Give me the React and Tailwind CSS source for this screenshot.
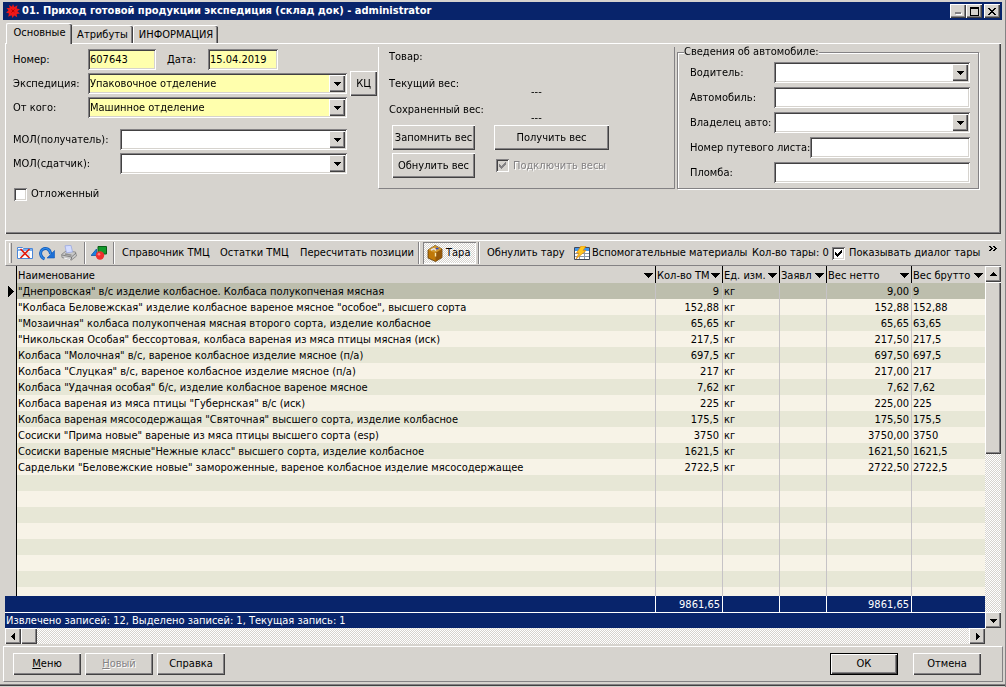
import React, { useState } from "react";
import clsx from "clsx";

const raised =
  "bg-[#d6d3ce] shadow-[inset_1px_1px_0_#fff,inset_-1px_-1px_0_#424142,inset_-2px_-2px_0_#848284]";
const sunken =
  "shadow-[inset_1px_1px_0_#848284,inset_-1px_-1px_0_#fff,inset_2px_2px_0_#424142,inset_-2px_-2px_0_#d6d3ce]";
const dither =
  "bg-[conic-gradient(#fff_25%,#d6d3ce_0_50%,#fff_0_75%,#d6d3ce_0)] bg-[length:2px_2px]";

const rows = [
  ['"Днепровская" в/с изделие колбасное. Колбаса полукопченая мясная', "9", "9,00", "9"],
  ['"Колбаса Беловежская" изделие колбасное вареное мясное "особое", высшего сорта', "152,88", "152,88", "152,88"],
  ['"Мозаичная" колбаса полукопченая мясная второго сорта, изделие колбасное', "65,65", "65,65", "63,65"],
  ['"Никольская Особая" бессортовая, колбаса вареная из мяса птицы мясная (иск)', "217,5", "217,50", "217,5"],
  ['Колбаса "Молочная" в/с, вареное колбасное изделие мясное (п/а)', "697,5", "697,50", "697,5"],
  ['Колбаса "Слуцкая" в/с, вареное колбасное изделие мясное (п/а)', "217", "217,00", "217"],
  ['Колбаса "Удачная особая" б/с, изделие колбасное вареное мясное', "7,62", "7,62", "7,62"],
  ['Колбаса вареная из мяса птицы "Губернская" в/с (иск)', "225", "225,00", "225"],
  ['Колбаса вареная мясосодержащая "Святочная" высшего сорта, изделие колбасное', "175,5", "175,50", "175,5"],
  ['Сосиски "Прима новые" вареные из мяса птицы высшего сорта (esp)', "3750", "3750,00", "3750"],
  ['Сосиски вареные мясные"Нежные класс" высшего сорта, изделие колбасное', "1621,5", "1621,50", "1621,5"],
  ['Сардельки "Беловежские новые" замороженные, вареное колбасное изделие мясосодержащее', "2722,5", "2722,50", "2722,5"],
];

const columns = ["Наименование", "Кол-во ТМ", "Ед. изм.", "Заявл", "Вес нетто", "Вес брутто"];

function Triangle({ dir = "down", className }) {
  const paths = {
    down: "M0 2h7v1H6v1H5v1H4v1H3V5H2V4H1V3H0z",
    up: "M0 5h7V4H6V3H5V2H4V1H3v1H2v1H1v1H0z",
    left: "M5 0v7H4V6H3V5H2V4H1V3h1V2h1V1h1V0z",
    right: "M2 0v7h1V6h1V5h1V4h1V3H5V2H4V1H3V0z",
  };
  return (
    <svg width="7" height="7" viewBox="0 0 7 7" shapeRendering="crispEdges" className={className}>
      <path d={paths[dir]} />
    </svg>
  );
}

function Button({ children, className, ...props }) {
  return (
    <button type="button" className={clsx(raised, "shrink-0 whitespace-nowrap text-center", className)} {...props}>
      {children}
    </button>
  );
}

function TextField({ id, className, ...props }) {
  return (
    <input id={id} type="text" className={clsx(sunken, "h-[21px] min-w-0 px-[2px] outline-none", className)} {...props} />
  );
}

function Combo({ id, value, yellow, className }) {
  return (
    <div className={clsx("relative h-[21px] min-w-0", className)}>
      <select
        id={id}
        className={clsx(
          sunken,
          "block h-full w-full appearance-none px-[2px] outline-none",
          yellow ? "bg-[#ffffad]" : "bg-white"
        )}
      >
        <option>{value}</option>
      </select>
      <span className={clsx(raised, "pointer-events-none absolute inset-y-[2px] right-[2px] flex w-4 items-center justify-center")}>
        <Triangle />
      </span>
    </div>
  );
}

function Check({ id, disabled, checked, onChange }) {
  return (
    <span className="relative block h-[13px] w-[13px] shrink-0">
      <input
        id={id}
        type="checkbox"
        checked={checked}
        disabled={disabled}
        onChange={onChange}
        className={clsx(sunken, "block h-full w-full appearance-none", disabled ? "bg-[#d6d3ce]" : "bg-white")}
      />
      {checked && (
        <svg width="7" height="7" viewBox="0 0 7 7" shapeRendering="crispEdges" className="pointer-events-none absolute top-[3px] left-[3px]">
          <path
            d="M0 2h1v1h1v1h1V3h1V2h1V1h1V0h1v3H6v1H5v1H4v1H3v1H2V6H1V5H0z"
            fill={disabled ? "#848284" : "#000"}
          />
        </svg>
      )}
    </span>
  );
}

function BurstIcon() {
  return (
    <svg width="14" height="14" viewBox="0 0 14 14">
      <path
        d="M7 0l1.3 3L11.500 1.200l-.8 3.400L14 5.300 11.400 7.300 14 9.600l-3.400.3.6 3.300-3-1.800L6.500 14l-1-2.800-3.300 1.600.8-3.300L0 8.600l2.500-2L.5 4l3.200.1L3 1l3 1.800z"
        fill="#f01818"
      />
      <path d="M5.500 5.500l3 2.500M8.500 5.500l-3 3" stroke="#b00000" />
    </svg>
  );
}

function DeleteIcon() {
  return (
    <svg width="16" height="16" viewBox="0 0 16 16">
      <path d="M.5 4.500v-2h5l1 1h9v10H.5z" fill="#fff" stroke="#4a86d8" />
      <path d="M1 4h14v2H1z" fill="#7db1f0" />
      <path d="M2.500 8h4M2.500 10h3M10 8h3M11 10h2" stroke="#9cc3ee" />
      <path d="M3.500 4l9 9M12.500 4l-9 9" stroke="#e01c10" strokeWidth="1.700" />
    </svg>
  );
}

function RefreshIcon() {
  return (
    <svg width="16" height="16" viewBox="0 0 16 16">
      <path d="M5.500 14C1 12 .5 6.500 3.500 4.500c3-2.200 7.500-1 8.200 4.500" fill="none" stroke="#1259b8" strokeWidth="3" />
      <path d="M5.500 14C1 12 .5 6.500 3.500 4.500c3-2.200 7.500-1 8.200 4.500" fill="none" stroke="#2f8ae8" strokeWidth="1.400" />
      <path d="M15.500 5.500v7.500H8z" fill="#1c6fd6" stroke="#1259b8" strokeWidth=".6" />
    </svg>
  );
}

function PrinterIcon() {
  return (
    <svg width="16" height="16" viewBox="0 0 16 16">
      <path d="M.5 9.500L5 6l9.500 1 1 4-5 4L1 12.500z" fill="#c9c9c9" stroke="#808080" strokeWidth=".8" />
      <path d="M4 .8l6-.4 1.500 6.500-6 1z" fill="#d3dcff" stroke="#9aa8e0" strokeWidth=".8" />
      <path d="M1 10l9.500 2 4.500-4M10.500 12v2.500" fill="none" stroke="#707070" strokeWidth=".8" />
      <path d="M4 9l6.500 1.200" stroke="#909090" strokeWidth="1.400" />
      <path d="M3 13l6 1.500" stroke="#fff" />
    </svg>
  );
}

function ShapesIcon() {
  return (
    <svg width="16" height="16" viewBox="0 0 16 16">
      <path d="M0 10.500L5.500 4v6.500z" fill="#1c80e0" stroke="#0f58a8" strokeWidth=".8" />
      <path d="M7 1.500h8.500V9H7z" fill="#139a2c" stroke="#0a5c18" />
      <circle cx="9" cy="10.500" r="4.200" fill="#f03030" />
      <circle cx="8" cy="9.300" r="1.300" fill="#ff8080" />
    </svg>
  );
}

function BoxIcon() {
  return (
    <svg width="16" height="17" viewBox="0 0 16 17">
      <path d="M1 5l7-4.500L15 4v8.500L8.500 16.500 1 13z" fill="#c07808" stroke="#5c3a08" strokeWidth=".8" />
      <path d="M1 5l7-4.500L15 4 8.500 8z" fill="#d09830" />
      <path d="M8.500 8L15 4v8.500l-6.500 4z" fill="#94580a" />
      <path d="M8.500 8v3.500" stroke="#f8e8b0" strokeWidth="1.400" />
      <path d="M4 5l3-1.500 2 2" fill="none" stroke="#e4e4f0" strokeWidth="1.400" />
      <path d="M9 3.500h2.500" stroke="#2840d0" strokeWidth="1.500" />
    </svg>
  );
}

function SheetIcon() {
  return (
    <svg width="16" height="14" viewBox="0 0 16 14">
      <path d="M.5 1.500h15v12H.5z" fill="#fff" stroke="#404858" />
      <path d="M1 2h14v3H1z" fill="#3f94ec" />
      <path d="M1 7.500h14M1 10.500h14M5.500 5v8M10.500 5v8" stroke="#8c98a8" />
      <path d="M7 0h5L9 4.500h3L2 13l3-6H2.500z" fill="#ffc820" stroke="#e08810" strokeWidth=".7" />
    </svg>
  );
}

function Separator() {
  return <span className="h-[22px] w-[2px] shrink-0 border-r border-l border-r-white border-l-[#848284]" />;
}

function ToolButton({ children, className, ...props }) {
  return (
    <button type="button" className={clsx("flex shrink-0 items-center whitespace-nowrap", className)} {...props}>
      {children}
    </button>
  );
}

function TitleBar() {
  return (
    <header className="mx-[3px] flex h-[18px] items-center bg-[#08246b] pr-[2px] pl-[3px] text-white">
      <BurstIcon />
      <h1 className="ml-[2px] flex-1 truncate font-bold">
        01. Приход готовой продукции экспедиция (склад док) - administrator
      </h1>
      <Button className="flex h-[14px] w-4 items-end justify-center pb-[3px]" aria-label="Свернуть">
        <svg width="7" height="3" viewBox="0 0 7 3" shapeRendering="crispEdges">
          <path d="M1 1h6v2H1z" fill="#fff" />
          <path d="M0 0h6v2H0z" fill="#848284" />
        </svg>
      </Button>
      <Button className="flex h-[14px] w-4 items-center justify-center" aria-label="Развернуть">
        <svg width="9" height="9" viewBox="0 0 9 9" shapeRendering="crispEdges">
          <path d="M0 0h9v9H0zM1 2v6h7V2z" fillRule="evenodd" />
        </svg>
      </Button>
      <Button className="ml-[2px] flex h-[14px] w-4 items-center justify-center" aria-label="Закрыть">
        <svg width="8" height="7" viewBox="0 0 8 7" shapeRendering="crispEdges">
          <path d="M0 0h2v1h1v1h2V1h1V0h2v1H7v1H6v1H5v1h1v1h1v1h1v1H6V6H5V5H3v1H2v1H0V6h1V5h1V4h1V3H2V2H1V1H0z" />
        </svg>
      </Button>
    </header>
  );
}

function Tabs() {
  const tab =
    "rounded-t-[2px] border-t border-l border-white px-[4px] shadow-[inset_-1px_0_0_#424142,inset_-2px_0_0_#848284]";
  return (
    <div role="tablist" className="ml-[6px] flex items-end">
      <button role="tab" aria-selected="true" className={clsx(tab, "-mb-px h-[21px] w-[66px] bg-[#d6d3ce] pb-[2px] whitespace-nowrap")}>
        Основные
      </button>
      <button role="tab" aria-selected="false" className={clsx(tab, "h-[18px] w-[61px] border-l-0 whitespace-nowrap")}>
        Атрибуты
      </button>
      <button role="tab" aria-selected="false" className={clsx(tab, "h-[18px] w-[85px] whitespace-nowrap")}>
        ИНФОРМАЦИЯ
      </button>
    </div>
  );
}

function DocumentFields() {
  const [delayed, setDelayed] = useState(false);
  return (
    <div className="w-[372px] shrink-0 pt-[5px] pl-[7px]">
      <div className="flex flex-col gap-[3px]">
        <div className="flex items-center">
          <label htmlFor="number" className="w-[75px]">Номер:</label>
          <TextField id="number" defaultValue="607643" autoFocus className="w-[68px] bg-[#ffffad]" />
          <label htmlFor="date" className="ml-[11px] w-[41px]">Дата:</label>
          <TextField id="date" defaultValue="15.04.2019" className="w-[70px] bg-[#ffffad]" />
        </div>
        <div className="flex h-[21px] items-center">
          <label htmlFor="expedition" className="w-[75px]">Экспедиция:</label>
          <Combo id="expedition" value="Упаковочное отделение" yellow className="w-[259px]" />
          <Button className="ml-[3px] h-[25px] w-[27px]">КЦ</Button>
        </div>
        <div className="flex items-center">
          <label htmlFor="from" className="w-[75px]">От кого:</label>
          <Combo id="from" value="Машинное отделение" yellow className="w-[259px]" />
        </div>
      </div>
      <div className="mt-[11px] flex flex-col gap-[3px]">
        <div className="flex items-center">
          <label htmlFor="receiver" className="w-[107px]">МОЛ(получатель):</label>
          <Combo id="receiver" value="" className="w-[227px]" />
        </div>
        <div className="flex items-center">
          <label htmlFor="sender" className="w-[107px]">МОЛ(сдатчик):</label>
          <Combo id="sender" value="" className="w-[227px]" />
        </div>
      </div>
      <div className="mt-[12px] ml-px flex items-center gap-[4px]">
        <Check id="delayed" checked={delayed} onChange={(e) => setDelayed(e.target.checked)} />
        <label htmlFor="delayed">Отложенный</label>
      </div>
    </div>
  );
}

function WeightPanel() {
  return (
    <section className="mt-[3px] h-[142px] w-[297px] shrink-0 border-r border-b border-l border-[#848284] border-l-white pl-[10px]">
      <p className="pt-[2px]">Товар:</p>
      <div className="mt-[11px] flex">
        <span className="w-[142px]">Текущий вес:</span>
        <span className="pt-2">---</span>
      </div>
      <div className="mt-[2px] flex">
        <span className="w-[142px]">Сохраненный вес:</span>
        <span className="pt-2">---</span>
      </div>
      <div className="-mt-px ml-[3px] flex flex-col gap-[3px]">
        <div className="flex gap-[19px]">
          <Button className="h-[25px] w-[83px]">Запомнить вес</Button>
          <Button className="h-[25px] w-[115px]">Получить вес</Button>
        </div>
        <div className="flex items-center gap-[21px]">
          <Button className="h-[25px] w-[83px]">Обнулить вес</Button>
          <div className="flex items-center gap-[4px]">
            <Check id="scales" checked disabled />
            <label htmlFor="scales" className="text-[#848284] [text-shadow:1px_1px_0_#fff]">Подключить весы</label>
          </div>
        </div>
      </div>
    </section>
  );
}

function CarFields() {
  return (
    <fieldset className="mr-[22px] ml-[2px] h-[145px] min-w-0 flex-1 border border-[#848284] pr-[8px] pl-[12px] shadow-[inset_1px_1px_0_#fff,1px_1px_0_#fff]">
      <legend className="-ml-[6px] bg-[#d6d3ce] leading-4">Сведения об автомобиле:</legend>
      <div className="mt-[2px] flex flex-col gap-[4px]">
        <div className="flex items-center">
          <label htmlFor="driver" className="w-[84px]">Водитель:</label>
          <Combo id="driver" value="" className="flex-1" />
        </div>
        <div className="flex items-center">
          <label htmlFor="car" className="w-[84px]">Автомобиль:</label>
          <TextField id="car" className="flex-1 bg-white" />
        </div>
        <div className="flex items-center">
          <label htmlFor="owner" className="w-[84px] whitespace-nowrap">Владелец авто:</label>
          <Combo id="owner" value="" className="flex-1" />
        </div>
        <div className="flex items-center">
          <label htmlFor="waybill" className="w-[120px] whitespace-nowrap">Номер путевого листа:</label>
          <TextField id="waybill" className="flex-1 bg-white" />
        </div>
        <div className="flex items-center">
          <label htmlFor="seal" className="w-[84px]">Пломба:</label>
          <TextField id="seal" className="flex-1 bg-white" />
        </div>
      </div>
    </fieldset>
  );
}

function Toolbar() {
  const [showDialog, setShowDialog] = useState(true);
  return (
    <div role="toolbar" className="mr-[4px] ml-[5px] mt-[6px] flex h-[26px] items-center border-t border-b border-l border-white border-b-[#848284] pl-[3px]">
      <span className="h-5 w-[3px] shrink-0 border-r border-l border-r-[#848284] border-l-white" />
      <ToolButton className="ml-[5px]" aria-label="Удалить"><DeleteIcon /></ToolButton>
      <ToolButton className="ml-[6px]" aria-label="Обновить"><RefreshIcon /></ToolButton>
      <ToolButton className="ml-[6px]" aria-label="Печать"><PrinterIcon /></ToolButton>
      <span className="w-[7px] shrink-0" />
      <Separator />
      <ToolButton className="mx-[5px]" aria-label="Фигуры"><ShapesIcon /></ToolButton>
      <span className="w-px shrink-0" />
      <Separator />
      <ToolButton className="ml-[7px] w-[98px]">Справочник ТМЦ</ToolButton>
      <ToolButton className="w-[80px]">Остатки ТМЦ</ToolButton>
      <ToolButton className="w-[118px]">Пересчитать позиции</ToolButton>
      <Separator />
      <ToolButton
        aria-pressed="true"
        className={clsx(dither, "ml-[3px] h-[22px] w-[53px] gap-[3px] pl-[4px] shadow-[inset_1px_1px_0_#848284,inset_-1px_-1px_0_#fff]")}
      >
        <BoxIcon />
        Тара
      </ToolButton>
      <span className="w-[2px] shrink-0" />
      <Separator />
      <ToolButton className="ml-[7px] w-[87px]">Обнулить тару</ToolButton>
      <ToolButton className="w-[178px] gap-[2px]">
        <SheetIcon />
        Вспомогательные материалы
      </ToolButton>
      <span className="w-[80px] shrink-0 whitespace-nowrap">Кол-во тары: 0</span>
      <Check id="dialog" checked={showDialog} onChange={(e) => setShowDialog(e.target.checked)} />
      <label htmlFor="dialog" className="ml-[4px] whitespace-nowrap">Показывать диалог тары</label>
      <button type="button" className="mr-[4px] ml-auto self-start" aria-label="Ещё">
        <svg width="8" height="5" viewBox="0 0 8 5" shapeRendering="crispEdges" className="mt-[5px]">
          <path d="M0 0h2v1h1v1h1v1H3v1H2v1H0V4h1V3h1V2H1V1H0zM4 0h2v1h1v1h1v1H7v1H6v1H4V4h1V3h1V2H5V1H4z" />
        </svg>
      </button>
    </div>
  );
}

function GoodsTable() {
  const text = "pt-[2px] pb-0 whitespace-nowrap";
  const line = "border-r border-[#c6c3c6]";
  const foot = "border-r border-b border-white";
  return (
    <table className="w-full table-fixed border-separate border-spacing-0 leading-[14px]">
      <colgroup>
        <col className="w-[12px]" />
        <col />
        <col className="w-[67px]" />
        <col className="w-[57px]" />
        <col className="w-[47px]" />
        <col className="w-[85px]" />
        <col className="w-[73px]" />
      </colgroup>
      <thead>
        <tr className="h-[17px]">
          <th className="border-r border-black p-0" />
          {columns.map((title, i) => (
            <th key={title} scope="col" className={clsx("pt-[2px] pr-[2px] pb-0 pl-px font-normal", i < 5 && "border-r border-black")}>
              <div className="flex items-center">
                <span className="min-w-0 flex-1 text-left whitespace-nowrap">{title}</span>
                <svg width="9" height="5" viewBox="0 0 9 5" shapeRendering="crispEdges" className="shrink-0">
                  <path d="M0 0h9v1H8v1H7v1H6v1H5v1H4V4H3V3H2V2H1V1H0z" />
                </svg>
              </div>
            </th>
          ))}
        </tr>
      </thead>
      <tbody>
        {rows.map(([name, qty, netto, brutto], i) => {
          const bg = i === 0 ? "bg-[#bdbead]" : i % 2 ? "bg-[#f7f3e7]" : "bg-[#e7e7d6]";
          return (
            <tr key={name} className="h-4">
              <td className="border-r border-black p-0">
                {i === 0 && (
                  <svg width="6" height="11" viewBox="0 0 6 11" shapeRendering="crispEdges" className="ml-[3px]">
                    <path d="M0 0h1v1h1v1h1v1h1v1h1v1h1v1H5v1H4v1H3v1H2v1H1v1H0z" />
                  </svg>
                )}
              </td>
              <td className={clsx(text, line, bg, "pr-0 pl-px")}>{name}</td>
              <td className={clsx(text, line, bg, "pr-[3px] pl-0 text-right")}>{qty}</td>
              <td className={clsx(text, line, bg, "pr-0 pl-px")}>кг</td>
              <td className={clsx(line, bg, "p-0")} />
              <td className={clsx(text, line, bg, "pr-[2px] pl-0 text-right")}>{netto}</td>
              <td className={clsx(text, bg, "pr-0 pl-px")}>{brutto}</td>
            </tr>
          );
        })}
        {[...Array(8)].map((_, i) => {
          const bg = i % 2 ? "bg-[#f7f3e7]" : "bg-[#e7e7d6]";
          return (
            <tr key={i} className={i === 7 ? "h-[9px]" : "h-4"}>
              <td className="border-r border-black p-0" />
              {[...Array(5)].map((_, j) => (
                <td key={j} className={clsx(line, bg, "p-0")} />
              ))}
              <td className={clsx(bg, "p-0")} />
            </tr>
          );
        })}
      </tbody>
      <tfoot className="bg-[#08246b] text-white">
        <tr className="h-[17px]">
          <td className="border-b border-white p-0" />
          <td className={clsx(foot, "p-0")} />
          <td className={clsx(foot, text, "pr-[2px] pl-0 text-right")}>9861,65</td>
          <td className={clsx(foot, "p-0")} />
          <td className={clsx(foot, "p-0")} />
          <td className={clsx(foot, text, "pr-[2px] pl-0 text-right")}>9861,65</td>
          <td className="border-b border-white p-0" />
        </tr>
      </tfoot>
    </table>
  );
}

function Grid() {
  return (
    <div className="mr-[4px] ml-[5px] grid grid-cols-[1fr_16px]">
      <div className="min-w-0">
        <GoodsTable />
        <p className="h-[15px] bg-[#08246b] pl-px leading-4 text-white">
          Извлечено записей: 12, Выделено записей: 1, Текущая запись: 1
        </p>
      </div>
      <div className={clsx(dither, "flex flex-col")}>
        <Button className="flex h-4 items-center justify-center" aria-label="Вверх"><Triangle dir="up" /></Button>
        <div className={clsx(raised, "h-[172px]")} />
        <Button className="mt-auto flex h-4 items-center justify-center" aria-label="Вниз"><Triangle /></Button>
      </div>
      <div className={clsx(dither, "flex h-4")}>
        <Button className="flex w-4 items-center justify-center" aria-label="Влево"><Triangle dir="left" /></Button>
        <div className={clsx(raised, "w-4")} />
        <Button className="ml-auto flex w-4 items-center justify-center" aria-label="Вправо"><Triangle dir="right" /></Button>
      </div>
    </div>
  );
}

function BottomBar() {
  return (
    <footer className="mr-[2px] ml-[3px] mt-[2px] flex h-[36px] items-center gap-[4px] border border-white border-r-[#848284] border-b-[#848284] pr-[21px] pl-[9px]">
      <Button className="h-[22px] w-[68px]"><u>М</u>еню</Button>
      <Button className="h-[22px] w-[68px] text-[#848284] [text-shadow:1px_1px_0_#fff]" disabled><u>Н</u>овый</Button>
      <Button className="h-[22px] w-[68px]">Справка</Button>
      <Button className="ml-auto h-[22px] w-[68px] border border-black">ОК</Button>
      <Button className="ml-[11px] h-[22px] w-[68px]">Отмена</Button>
    </footer>
  );
}

export default function App() {
  return (
    <main className="min-h-screen border-r border-[#848284] bg-[#d6d3ce] pt-[2px] font-['DejaVu_Sans_Condensed','DejaVu_Sans',sans-serif] text-[11px] leading-4 text-black">
      <TitleBar />
      <div className="pt-[3px]">
        <Tabs />
        <div className="mr-[4px] ml-[5px] flex h-[191px] border-t border-l border-white shadow-[inset_-1px_-1px_0_#424142,inset_-2px_-2px_0_#848284]">
          <DocumentFields />
          <WeightPanel />
          <CarFields />
        </div>
      </div>
      <Toolbar />
      <Grid />
      <BottomBar />
      <div className="mt-[2px] h-[2px] border-t border-[#848284] bg-[#424142]" />
    </main>
  );
}
